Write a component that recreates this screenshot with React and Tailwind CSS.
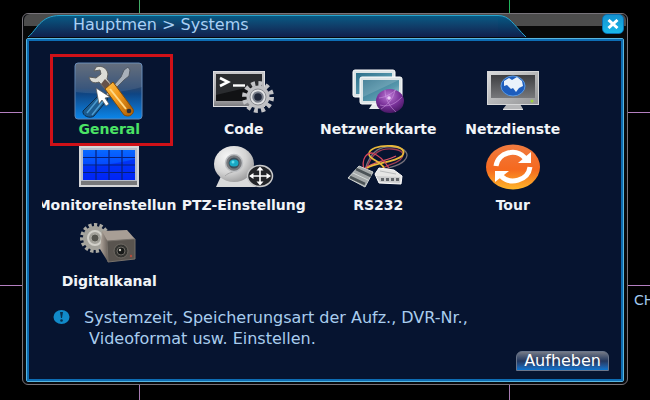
import clsx from 'clsx';

const ToolsIcon = () => (
  <svg width="70" height="58" viewBox="0 0 70 58">
    <defs>
      <linearGradient id="tile" x1="0" y1="0" x2="0" y2="1">
        <stop offset="0" stopColor="#56606f" />
        <stop offset="0.45" stopColor="#27466f" />
        <stop offset="0.55" stopColor="#0f4583" />
        <stop offset="1" stopColor="#0b86ea" />
      </linearGradient>
      <linearGradient id="grip" x1="0" y1="0" x2="1" y2="0.6">
        <stop offset="0" stopColor="#ffc14a" />
        <stop offset="0.5" stopColor="#f39a1c" />
        <stop offset="1" stopColor="#b9690b" />
      </linearGradient>
    </defs>
    <rect x="1" y="1" width="67" height="56" rx="3" fill="url(#tile)" stroke="#5f85b4" />
    <path d="M2 30c20 3 45 1 66-5V4a3 3 0 0 0-3-3H4a3 3 0 0 0-3 3z" fill="#fff" opacity="0.09" />
    <path d="M54 5l-4 3-3 7-15 17 2 2 16-16 5-4 1-6z" fill="#a9b1ba" stroke="#525b66" />
    <path d="M27 31l7 6-14 17c-4 3-12 0-11-5z" fill="#1c5c90" stroke="#0b2c4c" />
    <path d="M26 35L13 51M30 38L18 53" stroke="#4c9bcf" strokeWidth="1.5" />
    <path d="M22 5c6-2 11 1 12 7l-1 5 5 6-6 5-7-8c-5 2-9 0-10-5l7 1 5-4-1-4-6 1z" fill="#dcdcd6" stroke="#5e5f5e" />
    <path d="M31 17l5 5-4 6-5-6z" fill="#66534b" />
    <path d="M31 27l8-7 20 27c2 5-4 9-9 6z" fill="url(#grip)" stroke="#7d4a0b" />
    <path d="M36 27l16 20" stroke="#ffd884" strokeWidth="2" />
    <circle cx="55" cy="49" r="2.3" fill="#262e3c" />
    <path d="M22 26l3 16 3-4 4 6 3-2-4-6 5-1z" fill="#fff" stroke="#555" strokeWidth="0.7" />
  </svg>
);

const CodeIcon = () => (
  <svg width="64" height="44" viewBox="0 0 64 44">
    <defs>
      <linearGradient id="codeFrame" x1="0" y1="0" x2="0" y2="1">
        <stop offset="0" stopColor="#c9c9cb" />
        <stop offset="0.8" stopColor="#a5a4a6" />
        <stop offset="1" stopColor="#77787c" />
      </linearGradient>
    </defs>
    <rect x="1.5" y="2.5" width="51" height="35" fill="url(#codeFrame)" stroke="#dddde0" />
    <rect x="4" y="5" width="46" height="27" fill="#111214" />
    <path d="M4 5h46v10L4 26z" fill="#35373a" opacity="0.7" />
    <path d="M8 9l8 4-8 4" fill="none" stroke="#fff" strokeWidth="2.6" />
    <path d="M21 16.500h12" stroke="#fff" strokeWidth="2.4" />
    <circle cx="46" cy="28" r="13.500" fill="none" stroke="#c2c3c6" strokeWidth="5" strokeDasharray="3.800 3.270" />
    <circle cx="46" cy="28" r="11.500" fill="#bfc0c3" />
    <circle cx="46" cy="28" r="8" fill="#e0e1e3" stroke="#8b8d92" />
    <circle cx="46" cy="28" r="4.800" fill="#20283a" stroke="#777d89" strokeWidth="2" />
  </svg>
);

const NetworkIcon = () => (
  <svg width="54" height="46" viewBox="0 0 54 46">
    <defs>
      <linearGradient id="lcd" x1="0" y1="0" x2="1" y2="1">
        <stop offset="0" stopColor="#2b6f8a" />
        <stop offset="0.6" stopColor="#5798ad" />
        <stop offset="1" stopColor="#b8dbe2" />
      </linearGradient>
      <radialGradient id="purple" cx="0.45" cy="0.3" r="0.75">
        <stop offset="0" stopColor="#bd78d5" />
        <stop offset="0.55" stopColor="#783098" />
        <stop offset="1" stopColor="#40145c" />
      </radialGradient>
    </defs>
    <rect x="2" y="2" width="42" height="27" rx="2" fill="#dce5e7" stroke="#fff" />
    <rect x="5" y="5" width="36" height="21" fill="url(#lcd)" />
    <path d="M22 35h10l3 6H18z" fill="#e7eaec" />
    <rect x="9" y="9" width="42" height="27" rx="2" fill="#dde5e7" stroke="#fff" />
    <rect x="12" y="12" width="36" height="21" fill="url(#lcd)" />
    <path d="M12 12h36L12 29z" fill="#fff" opacity="0.16" />
    <ellipse cx="39" cy="33" rx="14" ry="12" fill="url(#purple)" />
    <path d="M28 30c8-1 13-5 17-8M29 37c10 3 17-3 22-8M34 22c0 9 5 17 11 22M44 22c-2 10-8 15-14 19" fill="none" stroke="#d9a9ec" strokeWidth="0.8" opacity="0.6" />
    <circle cx="38" cy="30" r="1.800" fill="#edcdf8" />
  </svg>
);

const ServicesIcon = () => (
  <svg width="54" height="42" viewBox="0 0 54 42">
    <defs>
      <linearGradient id="bezel" x1="0" y1="0" x2="1" y2="1">
        <stop offset="0" stopColor="#dadbdc" />
        <stop offset="1" stopColor="#939496" />
      </linearGradient>
      <linearGradient id="darkScreen" x1="0" y1="0" x2="0" y2="1">
        <stop offset="0" stopColor="#3e3f42" />
        <stop offset="1" stopColor="#77787b" />
      </linearGradient>
    </defs>
    <path d="M21 34h13l3 5H17z" fill="#b5b6b8" />
    <path d="M17 39h20v1H17z" fill="#e1e1e2" />
    <rect x="1.500" y="1.500" width="51" height="33" fill="url(#bezel)" stroke="#d6d7d8" />
    <rect x="5" y="5" width="44" height="23" fill="url(#darkScreen)" />
    <ellipse cx="27" cy="16" rx="12" ry="10" fill="#1d5dbd" stroke="#5999e2" />
    <path d="M18 11l5-3 3 2 5-3 5 4 1 5-4 2-3 4-3-4-2 1-4-4-3 1z" fill="#e9f2fb" />
    <circle cx="46" cy="31" r="1.500" fill="#9bd33a" />
  </svg>
);

const MonitorIcon = () => (
  <svg width="60" height="42" viewBox="0 0 60 42">
    <defs>
      <linearGradient id="blueScreen" x1="0" y1="0" x2="0" y2="1">
        <stop offset="0" stopColor="#0768ff" />
        <stop offset="1" stopColor="#0029ff" />
      </linearGradient>
    </defs>
    <rect x="1" y="1" width="58" height="39" fill="#77787a" stroke="#d4d5d7" strokeWidth="2" />
    <rect x="2" y="2" width="56" height="33" fill="#b5bcc9" />
    <rect x="4" y="4" width="52" height="30" fill="url(#blueScreen)" />
    <path d="M4 20c20 0 36-3 52-7v21H4z" fill="#0022f0" opacity="0.6" />
    <path d="M17 4v30M30 4v30M43 4v30M4 11.500h52M4 19h52M4 26.500h52" stroke="#072079" strokeWidth="1.2" />
  </svg>
);

const PtzIcon = () => (
  <svg width="60" height="44" viewBox="0 0 60 44">
    <defs>
      <radialGradient id="ball" cx="0.35" cy="0.3" r="0.75">
        <stop offset="0" stopColor="#f7f7f7" />
        <stop offset="0.6" stopColor="#d4d4d4" />
        <stop offset="1" stopColor="#9b9b9c" />
      </radialGradient>
    </defs>
    <path d="M8 29L2 42h40l-5-12z" fill="#d9dadb" />
    <ellipse cx="20" cy="19" rx="20" ry="18" fill="url(#ball)" />
    <path d="M11 31c4-4 8-3 11-6" stroke="#a7a7a8" fill="none" />
    <circle cx="20" cy="18" r="8.500" fill="#77797d" stroke="#bfc1c4" strokeWidth="1.500" />
    <circle cx="20" cy="18" r="5.500" fill="#3c4f5b" />
    <ellipse cx="20" cy="18" rx="4.500" ry="3.500" fill="#18a9c4" />
    <circle cx="19" cy="17" r="1.500" fill="#64dded" />
    <ellipse cx="46" cy="31" rx="12.500" ry="10.500" fill="#232529" stroke="#c9cacb" strokeWidth="1.500" />
    <path d="M46 23v16M37 31h18" stroke="#fff" strokeWidth="1.600" />
    <path d="M46 21.500l3.500 4h-7zM46 40.500l3.500-4h-7zM35 31l4.500-3v6zM57 31l-4.500-3v6z" fill="#fff" />
  </svg>
);

const CableIcon = () => (
  <svg width="62" height="46" viewBox="0 0 62 46">
    <g fill="none" strokeWidth="1.300">
      <path d="M18 26C24 4 36 2 46 3c14 1 17 8 11 14-5 5-14 6-21 9" stroke="#76717a" />
      <path d="M19 26C25 8 34 4 45 5c12 1 13 6 8 11-6 5-14 4-19 10" stroke="#a03b52" />
      <path d="M17 25C24 18 40 17 49 12" stroke="#e05869" />
      <path d="M20 24c11-6 26-5 35-12 4-5 0-9-10-10-14-1-23 3-23 8 0 6 11 6 15 14" stroke="#e8b83a" strokeWidth="1.800" />
      <path d="M17 26C14 14 20 9 25 9c7 2 12 7 17 15" stroke="#d6475c" />
    </g>
    <path d="M12 22l14 6-8 15L1 34z" fill="#a4a9a9" stroke="#d0d4d2" />
    <path d="M9 25l15 7M3 33l15 7" stroke="#4b5356" strokeWidth="2.500" />
    <path d="M6 29l15 7" stroke="#d5dad7" />
    <path d="M32 24l15 2 8 6-1 8-22-1-4-9z" fill="#e6e6e5" stroke="#fff" />
    <path d="M29 32l24 1v6l-20-1z" fill="#cdcecf" />
    <path d="M34 34h3v3h-3zM39 34h3v3h-3zM44 34h3v3h-3zM49 34h3v3h-3z" fill="#62666a" />
    <path d="M33 27l16 3" stroke="#b9bbbc" />
  </svg>
);

const TourIcon = () => (
  <svg width="56" height="46" viewBox="0 0 56 46">
    <defs>
      <linearGradient id="orange" x1="0" y1="0" x2="0" y2="1">
        <stop offset="0" stopColor="#f07b40" />
        <stop offset="0.55" stopColor="#f5691f" />
        <stop offset="1" stopColor="#ffb629" />
      </linearGradient>
    </defs>
    <ellipse cx="28" cy="23" rx="27" ry="22.500" fill="url(#orange)" />
    <path d="M11 22c2-14 20-18 29-8" fill="none" stroke="#fff" strokeWidth="5" />
    <path d="M46 8v11H33z" fill="#fff" />
    <path d="M45 23c-2 14-20 18-29 9" fill="none" stroke="#fff" strokeWidth="5" />
    <path d="M10 38V27h14z" fill="#fff" />
  </svg>
);

const DigitalIcon = () => (
  <svg width="58" height="42" viewBox="0 0 58 42">
    <defs>
      <linearGradient id="camSide" x1="0" y1="0" x2="1" y2="0">
        <stop offset="0" stopColor="#b5aaa0" />
        <stop offset="1" stopColor="#675f59" />
      </linearGradient>
    </defs>
    <circle cx="15" cy="16" r="13" fill="none" stroke="#aaa9a2" strokeWidth="4" strokeDasharray="3.200 2.240" />
    <circle cx="15" cy="16" r="12" fill="#a3a29b" />
    <circle cx="15" cy="16" r="7" fill="none" stroke="#d2d1ca" strokeWidth="2" />
    <circle cx="15" cy="16" r="4" fill="#55554f" stroke="#a8a79f" />
    <path d="M22 9l25-1 8 9-28 3z" fill="#a89e95" />
    <path d="M22 9l6 11v20L20 27z" fill="url(#camSide)" />
    <path d="M27 19l28-2v20l-27 3z" fill="#59544f" stroke="#77716b" />
    <circle cx="41" cy="29" r="7" fill="#343431" stroke="#6f6a63" />
    <circle cx="41" cy="29" r="4" fill="#171918" stroke="#6c6963" />
    <circle cx="40" cy="28" r="1.200" fill="#c8c5ba" />
    <circle cx="51" cy="34" r="1.200" fill="#b64c3d" />
  </svg>
);

const ITEMS = [
  { label: 'General', Icon: ToolsIcon, selected: true },
  { label: 'Code', Icon: CodeIcon },
  { label: 'Netzwerkkarte', Icon: NetworkIcon },
  { label: 'Netzdienste', Icon: ServicesIcon },
  { label: 'Monitoreinstellun', Icon: MonitorIcon, clipped: true },
  { label: 'PTZ-Einstellung', Icon: PtzIcon },
  { label: 'RS232', Icon: CableIcon },
  { label: 'Tour', Icon: TourIcon },
  { label: 'Digitalkanal', Icon: DigitalIcon },
];

const MenuItem = ({ label, Icon, selected, clipped }) => (
  <button type="button" className="relative flex min-w-0 flex-col">
    <span className="flex h-[58px] w-full items-center justify-center">
      <Icon />
    </span>
    <span
      className={clsx(
        'flex w-full overflow-hidden whitespace-nowrap text-[14px] leading-[18px] font-bold',
        clipped ? 'justify-end' : 'justify-center',
        selected ? 'text-[#4be365]' : 'text-[#f1f4f8]'
      )}
    >
      {label}
    </span>
    {selected && <span className="absolute -inset-y-2 right-1 left-2 border-3 border-[#cf1118]" />}
  </button>
);

// Live view split behind the dialog
const VideoGrid = () => (
  <div className="absolute inset-0 grid grid-cols-[140px_1fr_141px] grid-rows-[113px_1fr_114px]">
    <div className="border-r border-b border-r-[#43ad68] border-b-[#b47fc0]" />
    <div className="border-b border-[#b47fc0]" />
    <div className="border-b border-l border-b-[#b47fc0] border-l-[#20b45c]" />
    <div className="border-r border-b border-[#b47fc0]" />
    <div className="border-b border-[#b47fc0]" />
    <div className="border-b border-l border-[#b47fc0]" />
    <div className="border-r border-[#a77bb2]" />
    <div />
    <div className="overflow-hidden border-l border-[#a77bb2] pt-1 pl-[124px] text-[14px] text-[#a3c9ee]">
      CH
    </div>
  </div>
);

const TitleBar = () => (
  <header className="flex h-6 items-start justify-between rounded-t-md bg-linear-to-b from-[#4c4c4c] from-50% to-[#080808] to-50% pr-[2px] pl-1">
    <div className="flex h-[23px] pt-px">
      <svg width="32" height="22" viewBox="0 0 32 22">
        <defs>
          <linearGradient id="tab" x1="0" y1="0" x2="0" y2="1">
            <stop offset="0" stopColor="#065a84" />
            <stop offset="1" stopColor="#10204d" />
          </linearGradient>
        </defs>
        <path d="M0 22C9 15 12 .5 32 .5V22z" fill="url(#tab)" />
        <path d="M0 22C9 15 12 .5 32 .5" fill="none" stroke="#25a5cf" />
      </svg>
      <h1 className="w-[438px] border-t border-[#25a5cf] bg-linear-to-b from-[#065a84] to-[#10204d] pl-[13px] text-[16px] leading-[17px] text-[#a9d0f5]">
        Hauptmen &gt; Systems
      </h1>
      <svg width="28" height="22" viewBox="0 0 28 22">
        <path d="M0 .5c12 0 15 9 28 21.500H0z" fill="url(#tab)" />
        <path d="M0 .5c12 0 15 9 28 21.500" fill="none" stroke="#25a5cf" />
      </svg>
    </div>
    <button
      type="button"
      aria-label="Schließen"
      className="flex h-5 w-[22px] items-center justify-center rounded-[5px] border border-[#0b6fae] bg-linear-to-b from-[#1492d0] to-[#19b8ea]"
    >
      <svg width="12" height="10" viewBox="0 0 12 10">
        <path d="M1.500 1l9 8M10.500 1l-9 8" stroke="#fff" strokeWidth="3" />
      </svg>
    </button>
  </header>
);

const App = () => (
  <main className="relative min-h-screen overflow-hidden bg-black px-[22px] pt-[13px] pb-[14px] font-['DejaVu_Sans',sans-serif]">
    <VideoGrid />

    <section className="relative rounded-md border border-[#77737a] bg-[#080a0d] px-px pb-[2px]">
      <TitleBar />

      <div className="mx-[2px] rounded-xs border border-[#58b5de] bg-[#061430]">
        <div className="flex flex-col border-2 border-[#0d6db4] pt-[21px] pb-2">
          <div className="mr-[41px] ml-[13px] grid grid-cols-4">
            {ITEMS.map((item) => (
              <MenuItem key={item.label} {...item} />
            ))}
          </div>

          <div className="mt-[17px] ml-6 flex gap-[14px]">
            <svg width="17" height="21" viewBox="0 0 17 21" className="shrink-0">
              <ellipse cx="8.500" cy="10" rx="8" ry="7" fill="#118ac9" />
              <path d="M7 5h3l-1 6H8z" fill="#08304f" />
              <circle cx="8.500" cy="13.500" r="1.300" fill="#08304f" />
            </svg>
            <p className="whitespace-pre-wrap text-[16px] leading-[21px] text-[#a9cdee]">
              {'Systemzeit, Speicherungsart der Aufz., DVR-Nr.,\n Videoformat usw. Einstellen.'}
            </p>
          </div>

          <button
            type="button"
            className="mt-[2px] mr-3 self-end rounded-t-md border border-[#69758b] bg-linear-to-b from-[#747985] via-[#23385f] to-[#0874cf] px-[7px] text-[16px] leading-[18px] text-white"
          >
            Aufheben
          </button>
        </div>
      </div>
    </section>
  </main>
);

export default App;
